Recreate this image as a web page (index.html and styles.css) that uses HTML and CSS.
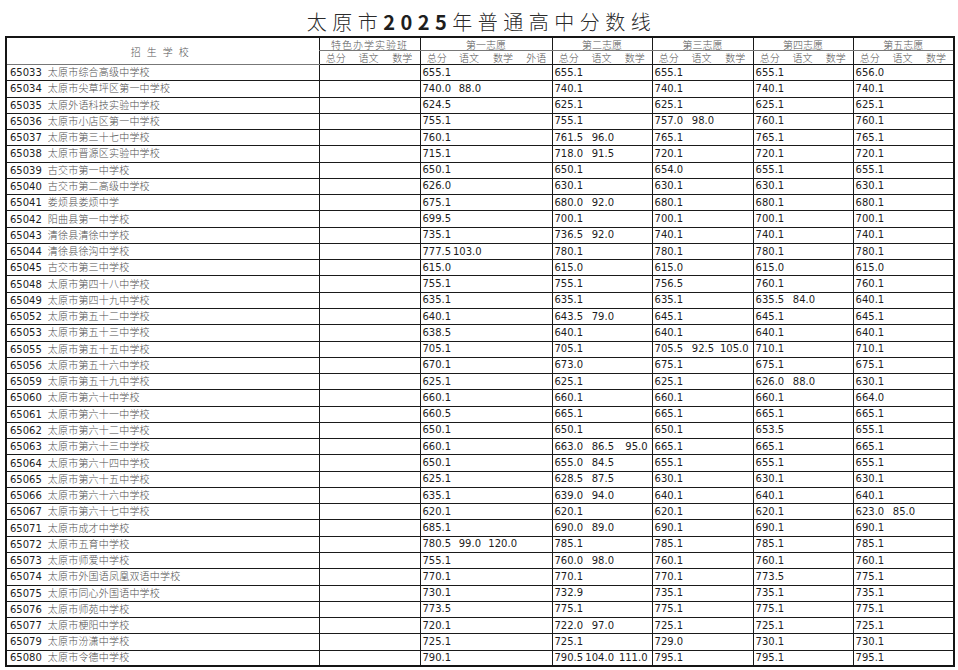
FILE: index.html
```html
<!DOCTYPE html>
<html lang="zh-CN">
<head>
<meta charset="utf-8">
<title>太原市2025年普通高中分数线</title>
<link rel="stylesheet" href="styles.css">
</head>
<body>
<div class="page">
<h1 class="title">太原市<b>2025</b>年普通高中分数线</h1>
<table class="scores">
<colgroup>
<col class="w-school">
<col class="w33"><col class="w33"><col class="w35">
<col class="w33"><col class="w32"><col class="w36"><col class="w31">
<col class="w33"><col class="w33"><col class="w34">
<col class="w33"><col class="w33"><col class="w35">
<col class="w33"><col class="w33"><col class="w34">
<col class="w33"><col class="w33"><col class="w35">
</colgroup>
<thead>
<tr class="h1">
<th rowspan="2" class="school-h">招生学校</th>
<th colspan="3" class="g wide">特色办学实验班</th>
<th colspan="4" class="g">第一志愿</th>
<th colspan="3" class="g">第二志愿</th>
<th colspan="3" class="g">第三志愿</th>
<th colspan="3" class="g">第四志愿</th>
<th colspan="3" class="g">第五志愿</th>
</tr>
<tr class="h2">
<th class="g">总分</th><th>语文</th><th>数学</th>
<th class="g">总分</th><th>语文</th><th>数学</th><th>外语</th>
<th class="g">总分</th><th>语文</th><th>数学</th>
<th class="g">总分</th><th>语文</th><th>数学</th>
<th class="g">总分</th><th>语文</th><th>数学</th>
<th class="g">总分</th><th>语文</th><th>数学</th>
</tr>
</thead>
<tbody>
<tr><td class="s"><span class="code">65033</span>太原市综合高级中学校</td><td class="g"></td><td></td><td></td><td class="g">655.1</td><td></td><td></td><td></td><td class="g">655.1</td><td></td><td></td><td class="g">655.1</td><td></td><td></td><td class="g">655.1</td><td></td><td></td><td class="g">656.0</td><td></td><td></td></tr>
<tr><td class="s"><span class="code">65034</span>太原市尖草坪区第一中学校</td><td class="g"></td><td></td><td></td><td class="g">740.0</td><td>88.0</td><td></td><td></td><td class="g">740.1</td><td></td><td></td><td class="g">740.1</td><td></td><td></td><td class="g">740.1</td><td></td><td></td><td class="g">740.1</td><td></td><td></td></tr>
<tr><td class="s"><span class="code">65035</span>太原外语科技实验中学校</td><td class="g"></td><td></td><td></td><td class="g">624.5</td><td></td><td></td><td></td><td class="g">625.1</td><td></td><td></td><td class="g">625.1</td><td></td><td></td><td class="g">625.1</td><td></td><td></td><td class="g">625.1</td><td></td><td></td></tr>
<tr><td class="s"><span class="code">65036</span>太原市小店区第一中学校</td><td class="g"></td><td></td><td></td><td class="g">755.1</td><td></td><td></td><td></td><td class="g">755.1</td><td></td><td></td><td class="g">757.0</td><td>98.0</td><td></td><td class="g">760.1</td><td></td><td></td><td class="g">760.1</td><td></td><td></td></tr>
<tr><td class="s"><span class="code">65037</span>太原市第三十七中学校</td><td class="g"></td><td></td><td></td><td class="g">760.1</td><td></td><td></td><td></td><td class="g">761.5</td><td>96.0</td><td></td><td class="g">765.1</td><td></td><td></td><td class="g">765.1</td><td></td><td></td><td class="g">765.1</td><td></td><td></td></tr>
<tr><td class="s"><span class="code">65038</span>太原市晋源区实验中学校</td><td class="g"></td><td></td><td></td><td class="g">715.1</td><td></td><td></td><td></td><td class="g">718.0</td><td>91.5</td><td></td><td class="g">720.1</td><td></td><td></td><td class="g">720.1</td><td></td><td></td><td class="g">720.1</td><td></td><td></td></tr>
<tr><td class="s"><span class="code">65039</span>古交市第一中学校</td><td class="g"></td><td></td><td></td><td class="g">650.1</td><td></td><td></td><td></td><td class="g">650.1</td><td></td><td></td><td class="g">654.0</td><td></td><td></td><td class="g">655.1</td><td></td><td></td><td class="g">655.1</td><td></td><td></td></tr>
<tr><td class="s"><span class="code">65040</span>古交市第二高级中学校</td><td class="g"></td><td></td><td></td><td class="g">626.0</td><td></td><td></td><td></td><td class="g">630.1</td><td></td><td></td><td class="g">630.1</td><td></td><td></td><td class="g">630.1</td><td></td><td></td><td class="g">630.1</td><td></td><td></td></tr>
<tr><td class="s"><span class="code">65041</span>娄烦县娄烦中学</td><td class="g"></td><td></td><td></td><td class="g">675.1</td><td></td><td></td><td></td><td class="g">680.0</td><td>92.0</td><td></td><td class="g">680.1</td><td></td><td></td><td class="g">680.1</td><td></td><td></td><td class="g">680.1</td><td></td><td></td></tr>
<tr><td class="s"><span class="code">65042</span>阳曲县第一中学校</td><td class="g"></td><td></td><td></td><td class="g">699.5</td><td></td><td></td><td></td><td class="g">700.1</td><td></td><td></td><td class="g">700.1</td><td></td><td></td><td class="g">700.1</td><td></td><td></td><td class="g">700.1</td><td></td><td></td></tr>
<tr><td class="s"><span class="code">65043</span>清徐县清徐中学校</td><td class="g"></td><td></td><td></td><td class="g">735.1</td><td></td><td></td><td></td><td class="g">736.5</td><td>92.0</td><td></td><td class="g">740.1</td><td></td><td></td><td class="g">740.1</td><td></td><td></td><td class="g">740.1</td><td></td><td></td></tr>
<tr><td class="s"><span class="code">65044</span>清徐县徐沟中学校</td><td class="g"></td><td></td><td></td><td class="g">777.5</td><td>103.0</td><td></td><td></td><td class="g">780.1</td><td></td><td></td><td class="g">780.1</td><td></td><td></td><td class="g">780.1</td><td></td><td></td><td class="g">780.1</td><td></td><td></td></tr>
<tr><td class="s"><span class="code">65045</span>古交市第三中学校</td><td class="g"></td><td></td><td></td><td class="g">615.0</td><td></td><td></td><td></td><td class="g">615.0</td><td></td><td></td><td class="g">615.0</td><td></td><td></td><td class="g">615.0</td><td></td><td></td><td class="g">615.0</td><td></td><td></td></tr>
<tr><td class="s"><span class="code">65048</span>太原市第四十八中学校</td><td class="g"></td><td></td><td></td><td class="g">755.1</td><td></td><td></td><td></td><td class="g">755.1</td><td></td><td></td><td class="g">756.5</td><td></td><td></td><td class="g">760.1</td><td></td><td></td><td class="g">760.1</td><td></td><td></td></tr>
<tr><td class="s"><span class="code">65049</span>太原市第四十九中学校</td><td class="g"></td><td></td><td></td><td class="g">635.1</td><td></td><td></td><td></td><td class="g">635.1</td><td></td><td></td><td class="g">635.1</td><td></td><td></td><td class="g">635.5</td><td>84.0</td><td></td><td class="g">640.1</td><td></td><td></td></tr>
<tr><td class="s"><span class="code">65052</span>太原市第五十二中学校</td><td class="g"></td><td></td><td></td><td class="g">640.1</td><td></td><td></td><td></td><td class="g">643.5</td><td>79.0</td><td></td><td class="g">645.1</td><td></td><td></td><td class="g">645.1</td><td></td><td></td><td class="g">645.1</td><td></td><td></td></tr>
<tr><td class="s"><span class="code">65053</span>太原市第五十三中学校</td><td class="g"></td><td></td><td></td><td class="g">638.5</td><td></td><td></td><td></td><td class="g">640.1</td><td></td><td></td><td class="g">640.1</td><td></td><td></td><td class="g">640.1</td><td></td><td></td><td class="g">640.1</td><td></td><td></td></tr>
<tr><td class="s"><span class="code">65055</span>太原市第五十五中学校</td><td class="g"></td><td></td><td></td><td class="g">705.1</td><td></td><td></td><td></td><td class="g">705.1</td><td></td><td></td><td class="g">705.5</td><td>92.5</td><td>105.0</td><td class="g">710.1</td><td></td><td></td><td class="g">710.1</td><td></td><td></td></tr>
<tr><td class="s"><span class="code">65056</span>太原市第五十六中学校</td><td class="g"></td><td></td><td></td><td class="g">670.1</td><td></td><td></td><td></td><td class="g">673.0</td><td></td><td></td><td class="g">675.1</td><td></td><td></td><td class="g">675.1</td><td></td><td></td><td class="g">675.1</td><td></td><td></td></tr>
<tr><td class="s"><span class="code">65059</span>太原市第五十九中学校</td><td class="g"></td><td></td><td></td><td class="g">625.1</td><td></td><td></td><td></td><td class="g">625.1</td><td></td><td></td><td class="g">625.1</td><td></td><td></td><td class="g">626.0</td><td>88.0</td><td></td><td class="g">630.1</td><td></td><td></td></tr>
<tr><td class="s"><span class="code">65060</span>太原市第六十中学校</td><td class="g"></td><td></td><td></td><td class="g">660.1</td><td></td><td></td><td></td><td class="g">660.1</td><td></td><td></td><td class="g">660.1</td><td></td><td></td><td class="g">660.1</td><td></td><td></td><td class="g">664.0</td><td></td><td></td></tr>
<tr><td class="s"><span class="code">65061</span>太原市第六十一中学校</td><td class="g"></td><td></td><td></td><td class="g">660.5</td><td></td><td></td><td></td><td class="g">665.1</td><td></td><td></td><td class="g">665.1</td><td></td><td></td><td class="g">665.1</td><td></td><td></td><td class="g">665.1</td><td></td><td></td></tr>
<tr><td class="s"><span class="code">65062</span>太原市第六十二中学校</td><td class="g"></td><td></td><td></td><td class="g">650.1</td><td></td><td></td><td></td><td class="g">650.1</td><td></td><td></td><td class="g">650.1</td><td></td><td></td><td class="g">653.5</td><td></td><td></td><td class="g">655.1</td><td></td><td></td></tr>
<tr><td class="s"><span class="code">65063</span>太原市第六十三中学校</td><td class="g"></td><td></td><td></td><td class="g">660.1</td><td></td><td></td><td></td><td class="g">663.0</td><td>86.5</td><td>95.0</td><td class="g">665.1</td><td></td><td></td><td class="g">665.1</td><td></td><td></td><td class="g">665.1</td><td></td><td></td></tr>
<tr><td class="s"><span class="code">65064</span>太原市第六十四中学校</td><td class="g"></td><td></td><td></td><td class="g">650.1</td><td></td><td></td><td></td><td class="g">655.0</td><td>84.5</td><td></td><td class="g">655.1</td><td></td><td></td><td class="g">655.1</td><td></td><td></td><td class="g">655.1</td><td></td><td></td></tr>
<tr><td class="s"><span class="code">65065</span>太原市第六十五中学校</td><td class="g"></td><td></td><td></td><td class="g">625.1</td><td></td><td></td><td></td><td class="g">628.5</td><td>87.5</td><td></td><td class="g">630.1</td><td></td><td></td><td class="g">630.1</td><td></td><td></td><td class="g">630.1</td><td></td><td></td></tr>
<tr><td class="s"><span class="code">65066</span>太原市第六十六中学校</td><td class="g"></td><td></td><td></td><td class="g">635.1</td><td></td><td></td><td></td><td class="g">639.0</td><td>94.0</td><td></td><td class="g">640.1</td><td></td><td></td><td class="g">640.1</td><td></td><td></td><td class="g">640.1</td><td></td><td></td></tr>
<tr><td class="s"><span class="code">65067</span>太原市第六十七中学校</td><td class="g"></td><td></td><td></td><td class="g">620.1</td><td></td><td></td><td></td><td class="g">620.1</td><td></td><td></td><td class="g">620.1</td><td></td><td></td><td class="g">620.1</td><td></td><td></td><td class="g">623.0</td><td>85.0</td><td></td></tr>
<tr><td class="s"><span class="code">65071</span>太原市成才中学校</td><td class="g"></td><td></td><td></td><td class="g">685.1</td><td></td><td></td><td></td><td class="g">690.0</td><td>89.0</td><td></td><td class="g">690.1</td><td></td><td></td><td class="g">690.1</td><td></td><td></td><td class="g">690.1</td><td></td><td></td></tr>
<tr><td class="s"><span class="code">65072</span>太原市五育中学校</td><td class="g"></td><td></td><td></td><td class="g">780.5</td><td>99.0</td><td>120.0</td><td></td><td class="g">785.1</td><td></td><td></td><td class="g">785.1</td><td></td><td></td><td class="g">785.1</td><td></td><td></td><td class="g">785.1</td><td></td><td></td></tr>
<tr><td class="s"><span class="code">65073</span>太原市师爱中学校</td><td class="g"></td><td></td><td></td><td class="g">755.1</td><td></td><td></td><td></td><td class="g">760.0</td><td>98.0</td><td></td><td class="g">760.1</td><td></td><td></td><td class="g">760.1</td><td></td><td></td><td class="g">760.1</td><td></td><td></td></tr>
<tr><td class="s"><span class="code">65074</span>太原市外国语凤凰双语中学校</td><td class="g"></td><td></td><td></td><td class="g">770.1</td><td></td><td></td><td></td><td class="g">770.1</td><td></td><td></td><td class="g">770.1</td><td></td><td></td><td class="g">773.5</td><td></td><td></td><td class="g">775.1</td><td></td><td></td></tr>
<tr><td class="s"><span class="code">65075</span>太原市同心外国语中学校</td><td class="g"></td><td></td><td></td><td class="g">730.1</td><td></td><td></td><td></td><td class="g">732.9</td><td></td><td></td><td class="g">735.1</td><td></td><td></td><td class="g">735.1</td><td></td><td></td><td class="g">735.1</td><td></td><td></td></tr>
<tr><td class="s"><span class="code">65076</span>太原市师苑中学校</td><td class="g"></td><td></td><td></td><td class="g">773.5</td><td></td><td></td><td></td><td class="g">775.1</td><td></td><td></td><td class="g">775.1</td><td></td><td></td><td class="g">775.1</td><td></td><td></td><td class="g">775.1</td><td></td><td></td></tr>
<tr><td class="s"><span class="code">65077</span>太原市梗阳中学校</td><td class="g"></td><td></td><td></td><td class="g">720.1</td><td></td><td></td><td></td><td class="g">722.0</td><td>97.0</td><td></td><td class="g">725.1</td><td></td><td></td><td class="g">725.1</td><td></td><td></td><td class="g">725.1</td><td></td><td></td></tr>
<tr><td class="s"><span class="code">65079</span>太原市汾潇中学校</td><td class="g"></td><td></td><td></td><td class="g">725.1</td><td></td><td></td><td></td><td class="g">725.1</td><td></td><td></td><td class="g">729.0</td><td></td><td></td><td class="g">730.1</td><td></td><td></td><td class="g">730.1</td><td></td><td></td></tr>
<tr><td class="s"><span class="code">65080</span>太原市令德中学校</td><td class="g"></td><td></td><td></td><td class="g">790.1</td><td></td><td></td><td></td><td class="g">790.5</td><td>104.0</td><td>111.0</td><td class="g">795.1</td><td></td><td></td><td class="g">795.1</td><td></td><td></td><td class="g">795.1</td><td></td><td></td></tr>
</tbody>
</table>
</div>
</body>
</html>
```

FILE: styles.css
```css
html, body {
  margin: 0;
  padding: 0;
  background: #ffffff;
}

.page {
  width: 958px;
  padding: 0 5px;
  box-sizing: border-box;
}

.title {
  margin: 0;
  height: 36px;
  padding-top: 10px;
  box-sizing: border-box;
  text-align: center;
  font-family: "Noto Sans CJK SC", "DejaVu Sans", sans-serif;
  font-weight: 300;
  font-size: 20px;
  line-height: 24px;
  letter-spacing: 5.5px;
  color: #2a2a2a;
  text-indent: 5px;
}

.title b {
  font-weight: 700;
  color: #1e1e1e;
}

.scores {
  width: 948px;
  table-layout: fixed;
  border-collapse: collapse;
  border: 2px solid #151515;
  font-family: "DejaVu Sans", "Noto Sans CJK SC", sans-serif;
  font-size: 10px;
  color: #1c1c1c;
}

.w-school { width: 313px; }
.w31 { width: 31px; }
.w32 { width: 32px; }
.w33 { width: 33px; }
.w34 { width: 34px; }
.w35 { width: 35px; }
.w36 { width: 36px; }

.scores th,
.scores td {
  padding: 0;
  border: none;
  border-bottom: 1px solid #1a1a1a;
  white-space: nowrap;
  overflow: hidden;
  vertical-align: middle;
}

.scores .g {
  border-left: 1px solid #1a1a1a;
}

.scores th {
  font-family: "Noto Sans CJK SC", sans-serif;
  font-weight: 300;
  font-size: 10px;
  color: #555;
  text-align: center;
  line-height: 11px;
}

.h1 th {
  height: 12px;
  border-bottom-color: #777;
}

.h2 th {
  height: 13px;
}

.h1 .wide {
  letter-spacing: 1px;
}

.school-h {
  letter-spacing: 6px;
  padding-left: 6px;
  font-size: 10.5px;
}

.scores tbody tr {
  height: 16.28px;
}

.scores td {
  text-align: right;
  padding-right: 4px;
  line-height: 12px;
}

.scores td.g {
  text-align: left;
  padding-left: 2px;
  padding-right: 0;
}

.scores td.s {
  text-align: left;
  padding-left: 3px;
  font-family: "Noto Sans CJK SC", sans-serif;
  font-weight: 300;
  color: #505050;
  letter-spacing: 0.2px;
}

.code {
  font-family: "DejaVu Sans", sans-serif;
  font-weight: 400;
  color: #1c1c1c;
  letter-spacing: 0;
  margin-right: 6px;
}
```
